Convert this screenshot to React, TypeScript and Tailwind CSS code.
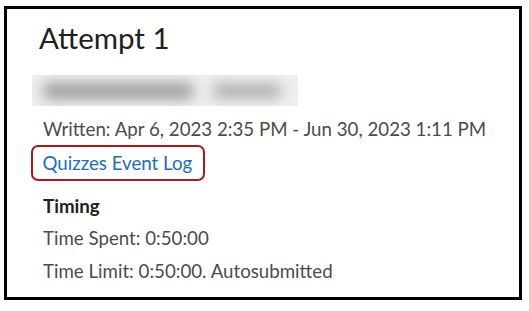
export default function App() {
  return (
    <div className="w-[529px] h-[311px] bg-white pt-[6px] pl-[4px]" style={{ fontFamily: "Lato, 'Noto Sans', sans-serif" }}>
      <div className="w-[518px] h-[294px] border-[3px] border-black box-border">
        <div className="pl-[24px] pt-[12px] text-[#494c4e]">
          <div className="text-[29.5px] leading-[34px] pl-[8px] text-[#202122]">Attempt 1</div>
          <div className="mt-[20px] ml-[1px] w-[266px] h-[31px] bg-[#efefef] relative overflow-hidden">
            <div className="absolute left-[10px] top-[8px] w-[152px] h-[16px] rounded-full bg-[#9a9a9a] blur-[7px]" />
            <div className="absolute left-[180px] top-[9px] w-[70px] h-[14px] rounded-full bg-[#ababab] blur-[7px]" />
          </div>
          <div className="mt-[11px] pl-[12px] text-[18.7px] leading-[24px]">Written: Apr 6, 2023 2:35 PM - Jun 30, 2023 1:11 PM</div>
          <div className="mt-[4px] w-[174px] h-[36px] border-[2.5px] border-[#b0161e] rounded-[7px] pl-[9.5px] flex items-center">
            <span className="text-[18.7px] leading-[24px] text-[#1d6fb8]">Quizzes Event Log</span>
          </div>
          <div className="mt-[13px] pl-[12px] text-[18.7px] leading-[24px] font-bold text-[#202122]">Timing</div>
          <div className="mt-[8px] pl-[12px] text-[18.7px] leading-[24px]">Time Spent: 0:50:00</div>
          <div className="mt-[9px] pl-[12px] text-[18.7px] leading-[24px]">Time Limit: 0:50:00. Autosubmitted</div>
        </div>
      </div>
    </div>
  );
}
